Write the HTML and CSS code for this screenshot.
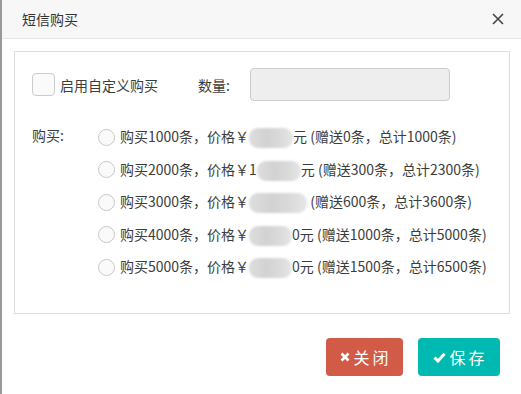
FILE: index.html
```html
<!DOCTYPE html>
<html>
<head>
    <meta charset="UTF-8">
    <meta name="viewport" content="width=device-width, initial-scale=1.0">
    <title>短信购买</title>
    <link rel="stylesheet" href="styles.css">
</head>
<body>
    <div class="modal">
        <div class="modal-header">
            <span class="modal-title">短信购买</span>
            <svg class="close-icon" width="12" height="12" viewBox="0 0 12 12">
                <path d="M1 1 L11 11 M11 1 L1 11" stroke="#444" stroke-width="1.6" fill="none"/>
            </svg>
        </div>

        <div class="modal-body">
            <div class="panel">
                <div class="custom-row">
                    <span class="checkbox"></span>
                    <span class="custom-label">启用自定义购买</span>
                    <span class="qty-label">数量:</span>
                    <input class="qty-input" type="text" disabled>
                </div>

                <div class="buy-block">
                    <div class="buy-label">购买:</div>
                    <div class="options">
                        <div class="option">
                            <span class="radio"></span>
                            <span>购买1000条，价格￥<span class="blur" style="width: 44px"></span>元 (赠送0条，总计1000条)</span>
                        </div>
                        <div class="option">
                            <span class="radio"></span>
                            <span>购买2000条，价格￥1<span class="blur" style="width: 44px"></span>元 (赠送300条，总计2300条)</span>
                        </div>
                        <div class="option">
                            <span class="radio"></span>
                            <span>购买3000条，价格￥<span class="blur" style="width: 58px"></span> (赠送600条，总计3600条)</span>
                        </div>
                        <div class="option">
                            <span class="radio"></span>
                            <span>购买4000条，价格￥<span class="blur" style="width: 43px"></span>0元 (赠送1000条，总计5000条)</span>
                        </div>
                        <div class="option">
                            <span class="radio"></span>
                            <span>购买5000条，价格￥<span class="blur" style="width: 43px"></span>0元 (赠送1500条，总计6500条)</span>
                        </div>
                    </div>
                </div>
            </div>
        </div>

        <div class="modal-footer">
            <button class="btn btn-close">
                <svg width="10" height="10" viewBox="0 0 10 10">
                    <path d="M1.5 1.5 L8.5 8.5 M8.5 1.5 L1.5 8.5" stroke="#fff" stroke-width="2.6" fill="none"/>
                </svg>关闭
            </button>
            <button class="btn btn-save">
                <svg width="13" height="11" viewBox="0 0 13 11">
                    <path d="M1.5 5.5 L5 9 L11.5 1.8" stroke="#fff" stroke-width="3" fill="none"/>
                </svg>保存
            </button>
        </div>
    </div>
</body>
</html>
```

FILE: styles.css
```css
body {
    margin: 0;
    font-family: "Noto Sans CJK SC", "Noto Sans", sans-serif;
    font-size: 14px;
    color: #3c3c3c;
    background-color: #fff;
}

.modal {
    border-left: 2px solid #999;
    height: 394px;
    box-sizing: border-box;
}

.modal-header {
    height: 38px;
    background-color: #f7f7f7;
    border-bottom: 1px solid #e5e5e5;
    display: flex;
    align-items: center;
    justify-content: space-between;
    padding: 0 17px 0 20px;
}

.modal-title {
    font-size: 14px;
    color: #333;
}

.modal-body {
    padding: 12px 11px 0 12px;
}

.panel {
    border: 1px solid #ddd;
    height: 263px;
    box-sizing: border-box;
    padding: 16px 17px;
}

.custom-row {
    display: flex;
    align-items: center;
    height: 33px;
}

.checkbox {
    width: 21px;
    height: 21px;
    border: 1px solid #ccc;
    border-radius: 4px;
    background-color: #fafafa;
    margin-right: 5px;
}

.custom-label {
    width: 138px;
}

.qty-label {
    width: 52px;
}

.qty-input {
    width: 200px;
    height: 33px;
    box-sizing: border-box;
    border: 1px solid #ccc;
    border-radius: 4px;
    background-color: #eee;
    margin: 0;
}

.buy-block {
    display: flex;
    margin-top: 20px;
}

.buy-label {
    width: 66px;
    line-height: 28px;
}

.option {
    display: flex;
    align-items: center;
    height: 32.5px;
    white-space: nowrap;
}

.radio {
    width: 15px;
    height: 15px;
    border: 1px solid #c8c8c8;
    border-radius: 50%;
    background-color: #fafafa;
    margin-right: 5px;
}

.blur {
    display: inline-block;
    height: 20px;
    vertical-align: middle;
    border-radius: 9px;
    background: linear-gradient(90deg, #dedede, #d2d2d2 40%, #dadada 70%, #e6e6e6);
    filter: blur(1px);
}

.modal-footer {
    display: flex;
    justify-content: flex-end;
    gap: 15px;
    padding: 24px 21px 0 0;
}

.btn {
    height: 38px;
    border: none;
    border-radius: 4px;
    color: #fff;
    font-family: "Noto Sans CJK SC", sans-serif;
    font-size: 16px;
    letter-spacing: 3px;
    display: flex;
    align-items: center;
    justify-content: center;
    gap: 3px;
    padding: 0 0 0 3px;
}

.btn-close {
    width: 77px;
    background-color: #d15b47;
}

.btn-save {
    width: 82px;
    background-color: #00b9b1;
}
```
